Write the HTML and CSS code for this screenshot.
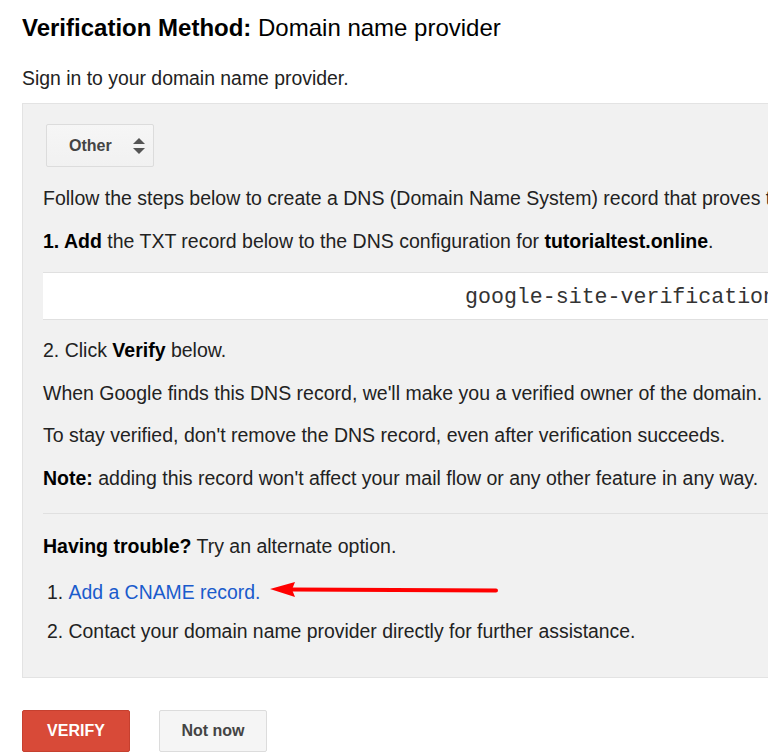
FILE: index.html
```html
<!DOCTYPE html>
<html>
<head>
<meta charset="utf-8">
<link rel="stylesheet" href="styles.css">
</head>
<body>
<div class="page">
  <h2 class="method_title"><b>Verification Method:</b> Domain name provider</h2>
  <p class="method_sub">Sign in to your domain name provider.</p>

  <div class="panel">
    <div class="provider_select">
      <span>Other</span>
      <span class="select_arrows"></span>
    </div>

    <p>Follow the steps below to create a DNS (Domain Name System) record that proves that you own the domain.</p>
    <p><b>1. Add</b> the TXT record below to the DNS configuration for <b>tutorialtest.online</b>.</p>

    <div class="record_box">google-site-verification=Xk3pQ8vLm2RzT7aYw4NcBd9HsJf6EuGq1oVi5tKxZ0</div>

    <p>2. Click <b>Verify</b> below.</p>
    <p>When Google finds this DNS record, we'll make you a verified owner of the domain.</p>
    <p>To stay verified, don't remove the DNS record, even after verification succeeds.</p>
    <p><b>Note:</b> adding this record won't affect your mail flow or any other feature in any way.</p>

    <div class="divider"></div>

    <p class="trouble"><b>Having trouble?</b> Try an alternate option.</p>
    <ol class="alt_list">
      <li><a href="#">Add a CNAME record.</a></li>
      <li>Contact your domain name provider directly for further assistance.</li>
    </ol>

    <!-- annotation arrow drawn over the screenshot -->
    <svg class="note_arrow" width="240" height="20" viewBox="0 0 240 20">
      <path d="M2 9 L27 2 L24 9.5 L27 17 Z" fill="#ff0000"/>
      <path d="M24 9.5 L228 10.5" stroke="#ff0000" stroke-width="4" stroke-linecap="round" fill="none"/>
    </svg>
  </div>

  <div class="actions">
    <button class="btn_verify">VERIFY</button>
    <button class="btn_later">Not now</button>
  </div>
</div>
</body>
</html>
```

FILE: styles.css
```css
html, body {
  overflow: hidden;
}
body {
  margin: 0;
  background: #ffffff;
  font-family: "Liberation Sans", Arial, sans-serif;
  color: #222222;
}
.page {
  width: 1400px;
  padding: 13px 0 0 22px;
}
.method_title {
  margin: 0;
  font-size: 24px;
  font-weight: normal;
  line-height: 30px;
  color: #000000;
}
.method_sub {
  margin: 23px 0 13px;
  font-size: 19.4px;
  line-height: 24px;
}
.panel {
  position: relative;
  background: #f1f1f1;
  border: 1px solid #e3e3e3;
  padding: 20px 0 20px 20px;
}
.panel p {
  margin: 0 0 19px;
  font-size: 19.5px;
  line-height: 23.5px;
  white-space: nowrap;
}
.panel b {
  color: #000000;
}
.panel .trouble {
  margin-bottom: 22px;
}
.provider_select {
  display: flex;
  align-items: center;
  justify-content: space-between;
  box-sizing: border-box;
  width: 108px;
  height: 43px;
  margin: 0 0 20px 3px;
  padding: 0 8px 0 22px;
  border: 1px solid #dcdcdc;
  border-radius: 2px;
  background: linear-gradient(#f6f6f6, #f1f1f1);
  font-size: 16px;
  font-weight: bold;
  color: #444444;
}
.select_arrows {
  width: 12px;
  height: 16px;
  position: relative;
}
.select_arrows::before,
.select_arrows::after {
  content: "";
  position: absolute;
  left: 0;
  border-left: 6px solid transparent;
  border-right: 6px solid transparent;
}
.select_arrows::before {
  top: 0;
  border-bottom: 6px solid #555555;
}
.select_arrows::after {
  bottom: 0;
  border-top: 6px solid #555555;
}
.record_box {
  height: 46px;
  line-height: 48px;
  margin: 0 0 19px;
  padding-left: 422px;
  background: #ffffff;
  border-top: 1px solid #e0e0e0;
  border-bottom: 1px solid #e0e0e0;
  font-family: "Liberation Mono", "Courier New", monospace;
  font-size: 21.6px;
  color: #333333;
  white-space: nowrap;
}
.divider {
  height: 1px;
  background: #e0e0e0;
  margin: 23px 0 21px;
}
.alt_list {
  margin: 0;
  padding: 0 0 0 4px;
  list-style-position: inside;
  font-size: 19.4px;
  line-height: 23.5px;
}
.alt_list li {
  margin-bottom: 15.5px;
}
.alt_list li:last-child {
  margin-bottom: 13.5px;
}
.alt_list a {
  color: #1a5bcc;
  text-decoration: none;
}
.note_arrow {
  position: absolute;
  left: 245px;
  top: 476px;
}
.actions {
  display: flex;
  gap: 29px;
  margin-top: 32px;
}
.actions button {
  height: 42px;
  width: 108px;
  border-radius: 2px;
  font-family: "Liberation Sans", Arial, sans-serif;
  font-size: 16px;
  font-weight: bold;
}
.btn_verify {
  background: #d84a38;
  border: 1px solid #c6402f;
  color: #ffffff;
}
.btn_later {
  background: #f5f5f5;
  border: 1px solid #dcdcdc;
  color: #444444;
}
```
